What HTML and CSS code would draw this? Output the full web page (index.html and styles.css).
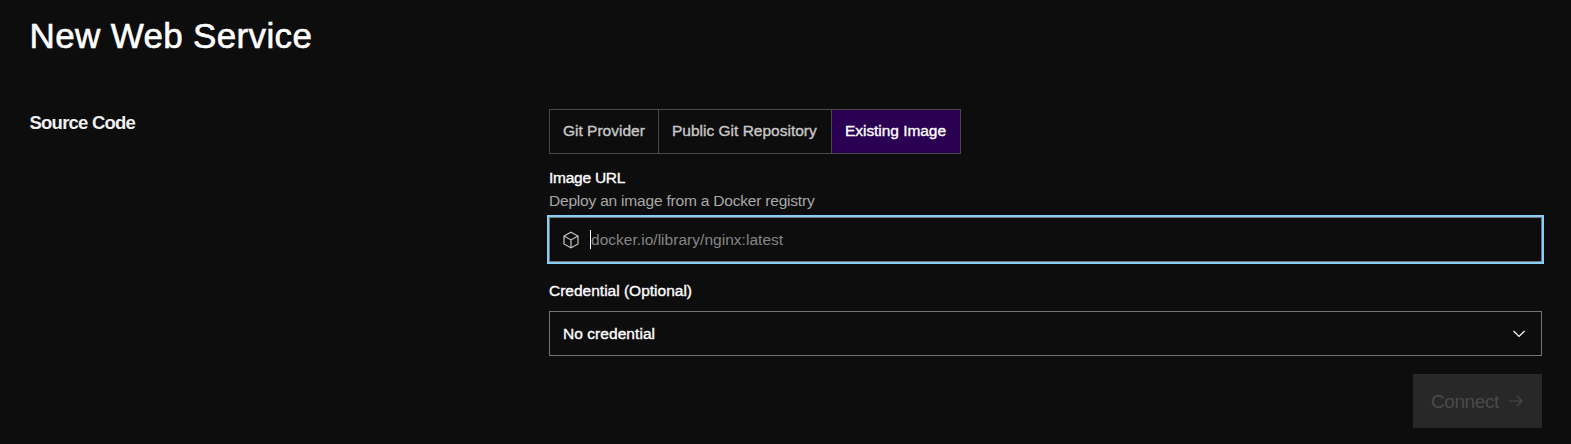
FILE: index.html
```
<!DOCTYPE html>
<html lang="en">
<head>
<meta charset="utf-8">
<title>New Web Service</title>
<link rel="stylesheet" href="styles.css">
</head>
<body>
<main class="page">
  <h1 class="title"><span>New Web Service</span></h1>
  <section class="row">
    <h2 class="section-title"><span>Source Code</span></h2>
    <form class="form">
      <div class="tabs">
        <button type="button" class="tab tab-git"><span>Git Provider</span></button>
        <button type="button" class="tab tab-public"><span>Public Git Repository</span></button>
        <button type="button" class="tab tab-image active"><span>Existing Image</span></button>
      </div>
      <div class="label label-url"><span>Image URL</span></div>
      <div class="hint"><span>Deploy an image from a Docker registry</span></div>
      <div class="field focused">
        <svg class="cube" viewBox="0 0 18 18"><path d="M9 1.200 16 5v8l-7 3.900L2 13V5zM2 5l7 3.900L16 5M9 8.900v8"/></svg>
        <i class="caret"></i>
        <span class="placeholder">docker.io/library/nginx:latest</span>
      </div>
      <div class="label label-cred"><span>Credential (Optional)</span></div>
      <div class="field select">
        <span class="value">No credential</span>
        <svg class="chevron" viewBox="0 0 14 8"><path d="m1.500 1 5.500 5.500L12.500 1"/></svg>
      </div>
      <button type="button" class="connect" disabled>
        <span>Connect</span>
        <svg class="arrow" viewBox="0 0 14 12"><path d="M0 6h13M8 1l5 5-5 5"/></svg>
      </button>
    </form>
  </section>
</main>
</body>
</html>
```
FILE: styles.css
```
* { box-sizing: border-box; }
body {
  margin: 0;
  background: #0d0d0d;
  color: #fff;
  font-family: "Liberation Sans", Arial, sans-serif;
  font-size: 15.5px;
  letter-spacing: -0.2px;
}
button { font: inherit; letter-spacing: inherit; }
svg { fill: none; stroke: currentColor; flex: none; }
.page { height: 444px; padding: 12px 29px 0 29.5px; overflow: hidden; }
.title { margin: 0; height: 48px; line-height: 48px; font-size: 35px; font-weight: 400; letter-spacing: 0.35px; white-space: nowrap; -webkit-text-stroke: 0.6px; }
.row { display: flex; justify-content: space-between; margin-top: 49px; }
.section-title { margin: 0; height: 28px; line-height: 28px; font-size: 18.5px; font-weight: 700; color: #f0f0f0; letter-spacing: -0.77px; }
.form { width: 993px; display: flex; flex-direction: column; white-space: nowrap; }
.tabs { display: flex; height: 45px; align-self: flex-start; border: 1px solid #4a4a4a; }
.tab { padding: 0 0 2px 13px; border: 0; border-right: 1px solid #4a4a4a; background: none; color: #c8c8c8; text-align: left; letter-spacing: 0; }
.tab, .label, .value { -webkit-text-stroke: 0.35px; }
.tab-git { width: 109px; }
.tab-public { width: 173px; }
.tab-image { width: 128px; border-right: 0; letter-spacing: -0.05px; }
.tab.active { background: #2a0052; color: #fff; }
.label { height: 24px; line-height: 24px; }
.label-url { margin-top: 12px; letter-spacing: -0.25px; }
.hint { height: 22px; line-height: 22px; margin-bottom: 5px; color: #a8a8a8; }
.field { display: flex; align-items: center; height: 45px; padding: 0 15px 0 13px; border: 1px solid #737373; }
.focused { outline: 2px solid #87cefa; padding-left: 12px; }
.cube { width: 18px; height: 18px; color: #c8c8c8; stroke-width: 1.2; }
.caret { width: 1px; height: 19px; margin-left: 10px; background: #fff; }
.placeholder { color: #858585; letter-spacing: 0.03px; }
.label-cred { margin-top: 17px; margin-bottom: 8px; letter-spacing: 0; }
.value { letter-spacing: 0.06px; }
.select { justify-content: space-between; }
.chevron { width: 14px; height: 8px; stroke-width: 1.2; }
.connect { display: flex; align-items: center; align-self: flex-end; width: 129px; height: 54px; margin-top: 18px; padding: 1px 0 0 18px; border: 0; background: #282828; color: #4a4a4a; font-size: 19px; letter-spacing: -0.42px; }
.arrow { width: 14px; height: 12px; margin-left: 10px; margin-bottom: 1px; stroke-width: 1.2; }
```
